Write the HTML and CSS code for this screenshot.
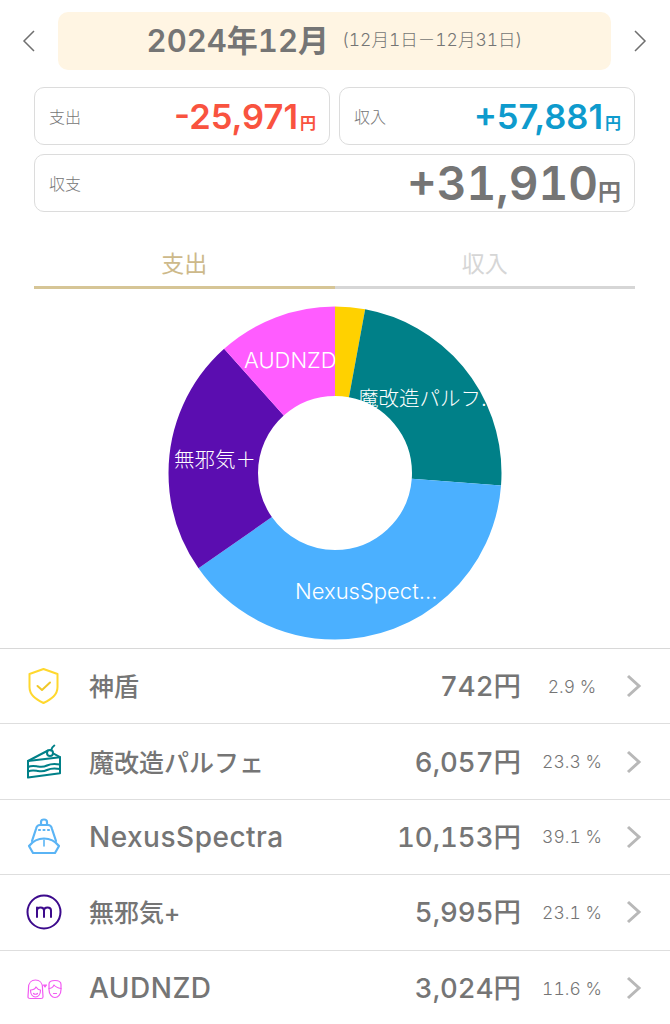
FILE: index.html
```html
<!DOCTYPE html>
<html lang="ja">
<head>
<meta charset="utf-8">
<title>2024年12月</title>
<link rel="stylesheet" href="styles.css">
</head>
<body>
<div class="month-bar">
    <svg class="month-arrow" width="14" height="24" viewBox="0 0 14 24"><path d="M12 2 2 12l10 10"/></svg>
    <div class="month-pill">
        <span class="month-title">2024年12月</span>
        <span class="month-range">(12月1日－12月31日)</span>
    </div>
    <svg class="month-arrow" width="14" height="24" viewBox="0 0 14 24"><path d="M2 2l10 10L2 22"/></svg>
</div>

<div class="summary">
    <div class="card">
        <span class="card-label">支出</span>
        <span class="card-value minus">-25,971<small>円</small></span>
    </div>
    <div class="card">
        <span class="card-label">収入</span>
        <span class="card-value plus">+57,881<small>円</small></span>
    </div>
    <div class="card wide">
        <span class="card-label">収支</span>
        <span class="card-value total">+31,910<small>円</small></span>
    </div>
</div>

<div class="tabs">
    <div class="tab active">支出</div>
    <div class="tab">収入</div>
</div>

<svg class="donut" width="334" height="334" viewBox="0 0 334 334">
    <g transform="rotate(-90 167 167)" fill="none" stroke-width="89.500">
        <circle cx="167" cy="167" r="121.750" pathLength="100" stroke="#ffd100" stroke-dasharray="2.9 97.1"/>
        <circle cx="167" cy="167" r="121.750" pathLength="100" stroke="#008088" stroke-dasharray="23.3 76.7" stroke-dashoffset="-2.9"/>
        <circle cx="167" cy="167" r="121.750" pathLength="100" stroke="#4bb0ff" stroke-dasharray="39.1 60.9" stroke-dashoffset="-26.2"/>
        <circle cx="167" cy="167" r="121.750" pathLength="100" stroke="#5b0db0" stroke-dasharray="23.1 76.9" stroke-dashoffset="-65.3"/>
        <circle cx="167" cy="167" r="121.750" pathLength="100" stroke="#ff5cff" stroke-dasharray="11.6 88.4" stroke-dashoffset="-88.4"/>
    </g>
    <text x="76" y="62">AUDNZD</text>
    <text class="donut-jp" x="190" y="100">魔改造パルフ.</text>
    <text x="127" y="293">NexusSpect...</text>
    <text class="donut-jp" x="6" y="161">無邪気＋</text>
</svg>

<div class="list">
    <div class="row">
        <svg class="row-icon" width="40" height="40" viewBox="0 0 40 40" fill="none" stroke="#ffd82e" stroke-width="2" stroke-linejoin="round" stroke-linecap="round">
            <path d="M19.500 3 33.500 8v13c0 8-6 12-14 16C11.500 33 5.500 29 5.500 21V8z"/>
            <path d="M13.500 20l4.500 4 8-7.500" stroke="#f0c828"/>
        </svg>
        <span class="row-name">神盾</span>
        <span class="row-amount">742円</span>
        <span class="row-pct">2.9 %</span>
        <svg class="row-arrow" width="16" height="24" viewBox="0 0 16 24"><path d="M2 2l11 10L2 22"/></svg>
    </div>
    <div class="row">
        <svg class="row-icon" width="40" height="40" viewBox="0 0 40 40" fill="none" stroke="#008088" stroke-width="2" stroke-linejoin="round" stroke-linecap="round">
            <path d="M4 19 24 8.500l12 6.700v16L4 35.500z"/>
            <path d="M4 19l32-3.800"/>
            <path d="M4 25c4-2 7-1 10-.5s6 .5 9-1 8-2 13-1M4 29.500c4-2 7-1 10-.5s6 .5 9-1 8-2 13-1"/>
            <circle cx="26" cy="11" r="3" fill="#fff"/>
            <path d="M27 8.500c.5-2 1.800-4 3.300-5"/>
        </svg>
        <span class="row-name">魔改造パルフェ</span>
        <span class="row-amount">6,057円</span>
        <span class="row-pct">23.3 %</span>
        <svg class="row-arrow" width="16" height="24" viewBox="0 0 16 24"><path d="M2 2l11 10L2 22"/></svg>
    </div>
    <div class="row">
        <svg class="row-icon" width="40" height="40" viewBox="0 0 40 40" fill="none" stroke="#5ab4f5" stroke-width="2.200" stroke-linejoin="round" stroke-linecap="round">
            <path d="M17 8V5c0-1.500 1-2.500 3-2.500s3 1 3 2.500v3"/>
            <path d="M8 24l4-12c.5-2.500 2-4 4-4h8c2 0 3.500 1.500 4 4l4 12"/>
            <path d="M15 13h1M19.500 13h1M24 13h1"/>
            <path d="M5 29c4-5 9.500-7.500 15-7.500S31 24 35 29l-4 7H9z"/>
            <path d="M20 23v6" stroke-width="1.600"/>
        </svg>
        <span class="row-name latin">NexusSpectra</span>
        <span class="row-amount">10,153円</span>
        <span class="row-pct">39.1 %</span>
        <svg class="row-arrow" width="16" height="24" viewBox="0 0 16 24"><path d="M2 2l11 10L2 22"/></svg>
    </div>
    <div class="row">
        <svg class="row-icon" width="40" height="40" viewBox="0 0 40 40" fill="none" stroke="#3c0a8c" stroke-width="2" stroke-linecap="round">
            <circle cx="20" cy="20" r="16.500"/>
            <path d="M13 25V15.500M13 18.500c0-2 1.500-3 3.500-3s3.500 1 3.500 3V25M20 18.500c0-2 1.500-3 3.500-3s3.500 1 3.500 3V25"/>
        </svg>
        <span class="row-name">無邪気+</span>
        <span class="row-amount">5,995円</span>
        <span class="row-pct">23.1 %</span>
        <svg class="row-arrow" width="16" height="24" viewBox="0 0 16 24"><path d="M2 2l11 10L2 22"/></svg>
    </div>
    <div class="row">
        <svg class="row-icon" width="40" height="40" viewBox="0 0 40 40" fill="none" stroke="#f25cf2" stroke-width="1.200" stroke-linecap="round" stroke-linejoin="round">
            <path d="M4 29c0-3 .5-5 .5-9 0-5 3-8 7-8s7 3 7 8c0 4 .5 6 .5 9 0 1-1 1.500-2 1.500H6c-1 0-2-.5-2-1.500z"/>
            <path d="M6.500 22c2.500 0 4.500-1 5.500-3 1 1.500 2.500 3 4.500 3 0 4-2 7-5 7s-5-3-5-7z"/>
            <path d="M9.500 25.500c1 1 3 1 4 0"/>
            <path d="M25 16c0-2 2.500-3.500 6-3.500s6 1.500 6 4v5c0 5-3 8-6 8s-6-3-6-8z"/>
            <path d="M25 20.500c2 0 4-1.500 5-3.500 1.500 2 4 3 7 3.500"/>
            <path d="M29.500 25.500h3"/>
            <path d="M19.500 17l1.500 2 1.500-2z" fill="#f25cf2"/>
        </svg>
        <span class="row-name latin">AUDNZD</span>
        <span class="row-amount">3,024円</span>
        <span class="row-pct">11.6 %</span>
        <svg class="row-arrow" width="16" height="24" viewBox="0 0 16 24"><path d="M2 2l11 10L2 22"/></svg>
    </div>
</div>
</body>
</html>
```

FILE: styles.css
```css
html, body {
    margin: 0;
    padding: 0;
    background: #fff;
}
body {
    width: 670px;
    height: 1024px;
    overflow: hidden;
    font-family: Inter, "Noto Sans CJK JP", sans-serif;
    font-feature-settings: "tnum";
    color: #757575;
}

.month-bar {
    display: flex;
    align-items: center;
    justify-content: space-between;
    padding: 12px 23px 0 22px;
}
.month-arrow path {
    fill: none;
    stroke: #6f6f6f;
    stroke-width: 1.500;
}
.month-pill {
    width: 553px;
    height: 58px;
    box-sizing: border-box;
    padding-bottom: 5px;
    background: #fff5e3;
    border-radius: 10px;
    display: flex;
    align-items: center;
    justify-content: center;
    gap: 13px;
}
.month-title {
    font-size: 31px;
    font-weight: 600;
}
.month-range {
    font-size: 17.500px;
    font-weight: 300;
}

.summary {
    display: grid;
    grid-template-columns: 296px 296px;
    gap: 9px;
    padding: 17px 0 0 34px;
}
.card {
    height: 58px;
    box-sizing: border-box;
    border: 1px solid #dcdcdc;
    border-radius: 10px;
    display: flex;
    align-items: center;
    justify-content: space-between;
    padding: 0 13px 0 14px;
}
.card.wide {
    grid-column: span 2;
}
.card-label {
    font-size: 16px;
    font-weight: 300;
}
.card-value {
    font-size: 34.500px;
    font-weight: 600;
    font-feature-settings: normal;
}
.card-value small {
    font-size: 16px;
    margin-left: 2px;
}
.minus { color: #f9533f; }
.plus { color: #0e9bcd; }
.total {
    font-size: 46px;
    font-feature-settings: "tnum";
}
.total small {
    font-size: 23px;
    margin-left: 0;
}

.tabs {
    display: flex;
    margin: 38px 35px 0 34px;
}
.tab {
    flex: 1;
    text-align: center;
    font-size: 23px;
    line-height: 28px;
    padding-bottom: 8px;
    color: #d6d6d6;
    border-bottom: 3px solid #d6d6d6;
}
.tab.active {
    color: #cdb98a;
    border-bottom-color: #d6c596;
}

.donut {
    display: block;
    margin: 17px 0 8px 167.500px;
}
.donut text {
    fill: #fff;
    font-size: 22px;
    font-weight: 300;
    font-feature-settings: normal;
}
.donut .donut-jp {
    font-size: 20.500px;
}

.list {
    border-top: 1px solid #d8d8d8;
}
.row {
    display: flex;
    align-items: center;
    height: 75.400px;
    box-sizing: border-box;
    border-bottom: 1px solid #dedede;
    padding: 0 28.500px 0 24px;
}
.row:last-child {
    border-bottom: none;
}
.row-name {
    flex: 1;
    margin-left: 25px;
    font-size: 25px;
    font-weight: 500;
    padding-bottom: 2px;
}
.row-name.latin {
    font-size: 28px;
    letter-spacing: 0.500px;
    font-feature-settings: normal;
    padding-bottom: 0;
}
.row-amount {
    font-size: 27.500px;
    font-weight: 500;
    padding-bottom: 4px;
}
.row-pct {
    width: 78px;
    margin-left: 12px;
    text-align: center;
    font-size: 17.500px;
    font-weight: 300;
}
.row-arrow {
    margin-left: 14.500px;
}
.row-arrow path {
    fill: none;
    stroke: #b8b8b8;
    stroke-width: 3;
}
```
